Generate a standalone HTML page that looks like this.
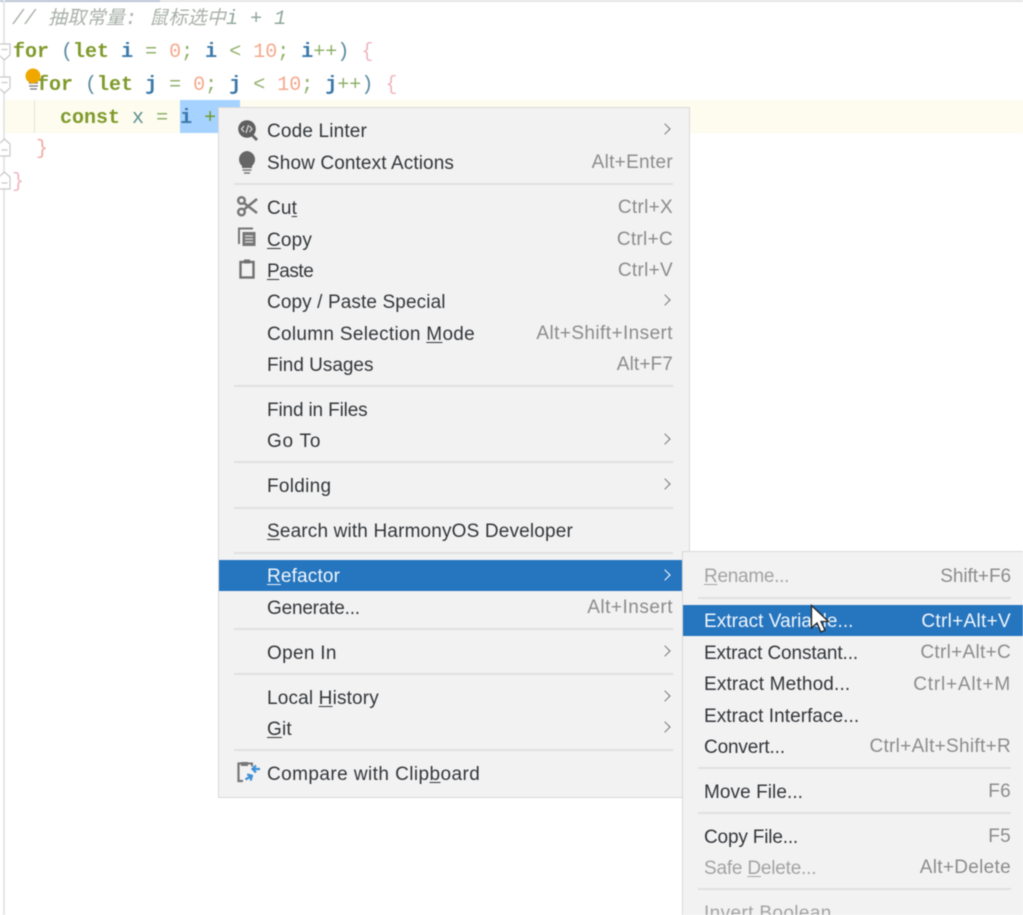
<!DOCTYPE html>
<html><head><meta charset="utf-8">
<style>
html,body{margin:0;padding:0;background:#fff}
#p{position:relative;width:1023px;height:915px;overflow:hidden;background:#fff;font-family:"Liberation Sans","Noto Sans CJK SC",sans-serif;filter:blur(.5px)}
.a{position:absolute}
.c{position:absolute;left:0;height:33px;margin-top:1px;font:500 20px/33px "Liberation Mono","Noto Sans CJK SC",monospace;white-space:pre;color:#5a8aa0}
.c b{font-weight:700;color:#7f9a2b}
.n{color:#f4a98e}.v{color:#3a78a8;font-weight:700}.o{color:#8fb06a}.br{color:#efb5c0}.m{color:#5e8f8f}
.t{position:absolute;margin-top:2px;font-size:19px;line-height:24px;height:24px;white-space:nowrap;color:#33363a;letter-spacing:.16px}
.k{position:absolute;margin-top:1px;font-size:19px;line-height:24px;height:24px;white-space:nowrap;color:#8c8c8c;letter-spacing:.3px}
.m1{left:267px}.k1{right:350px}
.m2{left:704px}.k2{right:12px}
.d{color:#a3a3a3}.w{color:#f0f6fb}
.s{position:absolute;height:2px;background:#e0e0e0}
.s1{left:234px;width:439px}.s2{left:698px;width:313px}
.ar{position:absolute;left:661px;margin-top:1px;width:7px;height:7px;border-top:1.6px solid #777;border-right:1.6px solid #777;transform:rotate(45deg)}
u{text-underline-offset:2px}
svg{position:absolute;overflow:visible}
</style></head><body><div id="p">

<div class="a" style="left:0;top:0;width:160px;height:2px;background:#b9c4d6"></div>
<div class="a" style="left:160px;top:0;width:863px;height:2px;background:#e4e4e4"></div>
<div class="a" style="left:3px;top:0;width:2px;height:915px;background:#e6e6e6"></div>
<div class="a" style="left:5px;top:100px;width:1018px;height:33px;background:#fdfcef"></div>
<div class="a" style="left:34px;top:100px;width:1px;height:33px;background:#e4e4dc"></div>
<div class="a" style="left:180px;top:100px;width:60px;height:33px;background:#a6d2ff"></div>

<div class="c" style="left:12px;top:2px;font-style:italic;font-weight:400;color:#a9b1a9;">// <span style="font-size:19px;letter-spacing:.25px">抽取常量</span>: <span style="font-size:19px;letter-spacing:.25px">鼠标选中</span><span style="color:#8fa79a">i + 1</span></div>
<div class="c" style="left:13px;top:35px"><b>for</b> (<b>let</b> <span class="v">i</span> <span class="o">=</span> <span class="n">0</span><span class="o">;</span> <span class="v">i</span> <span class="o">&lt;</span> <span class="n">10</span><span class="o">;</span> <span class="v">i</span><span class="o">++</span>) <span class="br">{</span></div>
<div class="c" style="left:37px;top:68px"><b>for</b> (<b>let</b> <span class="v">j</span> <span class="o">=</span> <span class="n">0</span><span class="o">;</span> <span class="v">j</span> <span class="o">&lt;</span> <span class="n">10</span><span class="o">;</span> <span class="v">j</span><span class="o">++</span>) <span class="br">{</span></div>
<div class="c" style="left:60px;top:101px"><b>const</b> <span class="m">x</span> <span class="o">=</span> <span class="v">i</span> <span class="o" style="color:#6f9a2b">+</span></div>
<div class="c" style="left:36px;top:132px;color:#f0a9a0">}</div>
<div class="c" style="left:12px;top:165px;color:#efb5c0">}</div>

<svg style="left:0;top:0" width="40" height="200" fill="#fff" stroke="#c8c8c8" stroke-width="1.2">
<path d="M-1 44h11v11l-5.500 5-5.500-5z"/><path d="M1.500 49.500h6"/>
<path d="M-1 77h11v11l-5.500 5-5.500-5z"/><path d="M1.500 82.500h6"/>
<path d="M-1 150v-6l5.500-5 5.500 5v12H-1z"/><path d="M1.500 150h6"/>
<path d="M-1 183v-6l5.500-5 5.500 5v12H-1z"/><path d="M1.500 183h6"/>
<path d="M29 83h9M29 86h9M30 89h7" stroke="#777" fill="none"/>
<circle cx="33" cy="76" r="7.500" fill="#eea800" stroke="none"/>
</svg>

<!-- Main menu -->
<div class="a" style="left:218px;top:107px;width:470px;height:689px;background:#f2f2f2;border:1px solid #d9d9d9"></div>
<div class="a" style="left:219px;top:560px;width:463px;height:31px;background:#2675bf"></div>

<svg style="left:236px;top:119px" width="24" height="24">
<circle cx="11" cy="10" r="8.800" fill="#5f5f5f"/><path d="M16 16l5 5" stroke="#666" stroke-width="2.800"/>
<path d="M8 7l-2.500 3L8 13M12.500 6l-2.500 8M13.500 7l2.500 3-2.500 3" stroke="#ddd" stroke-width="1.200" fill="none"/>
</svg>
<svg style="left:236px;top:150px" width="24" height="26">
<path d="M11 1a8.500 8.500 0 0 1 5 15v2H6v-2A8.500 8.500 0 0 1 11 1z" fill="#666"/><path d="M6.500 20h9M8 23h6" stroke="#777" stroke-width="1.500"/>
</svg>
<svg style="left:236px;top:195px" width="24" height="24" fill="none" stroke="#777" stroke-width="2.500">
<circle cx="5.500" cy="5.500" r="3.300"/><circle cx="5.500" cy="17" r="3.300"/><path d="M8 8l13 10M8 14.500L21 4"/>
</svg>
<svg style="left:236px;top:226px" width="24" height="24">
<path d="M3 18V2.500h14" fill="none" stroke="#777" stroke-width="2"/><rect x="6.500" y="6" width="13" height="14" fill="#777"/>
<path d="M9 10h8M9 13h8M9 16h8" stroke="#ddd" stroke-width="1.200"/>
</svg>
<svg style="left:236px;top:258px" width="24" height="24" fill="none" stroke="#707070" stroke-width="2.400">
<rect x="4.500" y="4" width="13" height="15.500"/><rect x="8" y="1.500" width="6" height="4" fill="#707070" stroke="none"/>
</svg>
<svg style="left:236px;top:761px" width="26" height="24" fill="none">
<path d="M9 2.500H2.500V20H7" stroke="#777" stroke-width="2.200"/><rect x="5" y="1" width="7" height="4" fill="#777"/><path d="M12 2.500h4v3" stroke="#777" stroke-width="2"/>
<path d="M24 8h-7M20 4.500L16.500 8l3.500 3.500" stroke="#3d8ed8" stroke-width="2.200"/><path d="M9 17h7M13 13.500l3.500 3.500-3.500 3.500" stroke="#3d8ed8" stroke-width="2.200" transform="rotate(-30 12 17)"/>
</svg>

<div class="t m1" style="top:118px">Code Linter</div><i class="ar" style="top:124px"></i>
<div class="t m1" style="top:150px;letter-spacing:.11px">Show Context Actions</div><div class="k k1" style="top:150px">Alt+Enter</div>
<div class="s s1" style="top:183px"></div>
<div class="t m1" style="top:195px">Cu<u>t</u></div><div class="k k1" style="top:195px">Ctrl+X</div>
<div class="t m1" style="top:227px"><u>C</u>opy</div><div class="k k1" style="top:227px">Ctrl+C</div>
<div class="t m1" style="top:258px;letter-spacing:-.44px"><u>P</u>aste</div><div class="k k1" style="top:258px">Ctrl+V</div>
<div class="t m1" style="top:289px;letter-spacing:.11px">Copy / Paste Special</div><i class="ar" style="top:295px"></i>
<div class="t m1" style="top:321px;letter-spacing:.3px">Column Selection <u>M</u>ode</div><div class="k k1" style="top:321px;letter-spacing:.42px">Alt+Shift+Insert</div>
<div class="t m1" style="top:352px;letter-spacing:-.02px">Find Usages</div><div class="k k1" style="top:352px;letter-spacing:.13px">Alt+F7</div>
<div class="s s1" style="top:385px"></div>
<div class="t m1" style="top:397px;letter-spacing:-.15px">Find in Files</div>
<div class="t m1" style="top:428px;letter-spacing:.76px">Go To</div><i class="ar" style="top:434px"></i>
<div class="s s1" style="top:461px"></div>
<div class="t m1" style="top:473px;letter-spacing:.3px">Folding</div><i class="ar" style="top:479px"></i>
<div class="s s1" style="top:507px"></div>
<div class="t m1" style="top:518px"><u>S</u>earch with HarmonyOS Developer</div>
<div class="s s1" style="top:552px"></div>
<div class="t m1 w" style="top:563px"><u>R</u>efactor</div><i class="ar" style="top:570px;border-color:#fff"></i>
<div class="t m1" style="top:595px;letter-spacing:-.2px">Generate...</div><div class="k k1" style="top:595px;letter-spacing:.5px">Alt+Insert</div>
<div class="s s1" style="top:628px"></div>
<div class="t m1" style="top:640px;letter-spacing:.3px">Open In</div><i class="ar" style="top:646px"></i>
<div class="s s1" style="top:673px"></div>
<div class="t m1" style="top:685px">Local <u>H</u>istory</div><i class="ar" style="top:691px"></i>
<div class="t m1" style="top:716px"><u>G</u>it</div><i class="ar" style="top:722px"></i>
<div class="s s1" style="top:749px"></div>
<div class="t m1" style="top:761px;letter-spacing:.43px">Compare with Clip<u>b</u>oard</div>

<!-- Submenu -->
<div class="a" style="left:682px;top:551px;width:345px;height:380px;background:#f2f2f2;border:1px solid #d9d9d9"></div>
<div class="a" style="left:683px;top:605px;width:340px;height:31px;background:#2675bf"></div>
<div class="t m2 d" style="top:563px;letter-spacing:-.28px"><u>R</u>ename...</div><div class="k k2" style="top:564px;letter-spacing:-.07px">Shift+F6</div>
<div class="s s2" style="top:597px"></div>
<div class="t m2 w" style="top:608px;letter-spacing:.05px">Extract Variable...</div><div class="k k2 w" style="top:609px">Ctrl+Alt+V</div>
<div class="t m2" style="top:640px;letter-spacing:-.12px">Extract Constant...</div><div class="k k2" style="top:640px">Ctrl+Alt+C</div>
<div class="t m2" style="top:671px">Extract Method...</div><div class="k k2" style="top:672px;letter-spacing:.8px">Ctrl+Alt+M</div>
<div class="t m2" style="top:703px;letter-spacing:.05px">Extract Interface...</div>
<div class="t m2" style="top:734px;letter-spacing:-.14px">Convert...</div><div class="k k2" style="top:734px">Ctrl+Alt+Shift+R</div>
<div class="s s2" style="top:767px"></div>
<div class="t m2" style="top:779px;letter-spacing:.07px">Move File...</div><div class="k k2" style="top:779px">F6</div>
<div class="s s2" style="top:812px"></div>
<div class="t m2" style="top:824px;letter-spacing:-.17px">Copy File...</div><div class="k k2" style="top:824px">F5</div>
<div class="t m2 d" style="top:855px;letter-spacing:-.2px">Safe <u>D</u>elete...</div><div class="k k2" style="top:855px">Alt+Delete</div>
<div class="s s2" style="top:888px"></div>
<div class="t m2 d" style="top:900px;letter-spacing:.37px">Invert Boolean</div>

<svg style="left:810px;top:604px" width="20" height="30">
<path d="M1.500 1.500V24l5.500-5 4 9 4-1.800-4-8.700h7.500z" fill="#fff" stroke="#222" stroke-width="1.300"/>
</svg>
</div></body></html>
